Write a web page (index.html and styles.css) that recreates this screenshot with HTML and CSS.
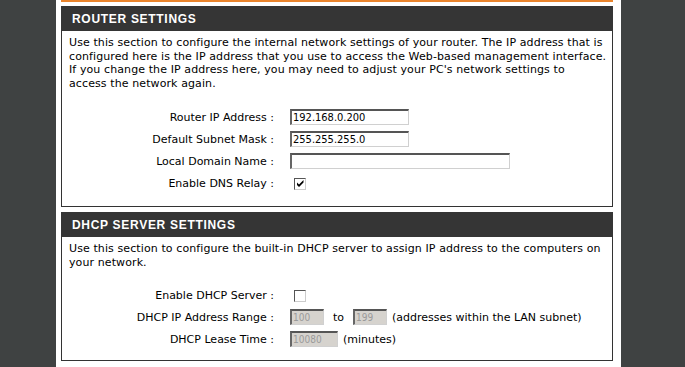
FILE: index.html
```html
<!DOCTYPE html>
<html lang="en">
<head>
    <meta charset="UTF-8">
    <title>Network Settings</title>
    <link rel="stylesheet" href="styles.css">
</head>
<body>
    <div id="main">
        <div class="topline"></div>

        <div class="section">
            <h2>ROUTER SETTINGS</h2>
            <div class="box">
                <p>Use this section to configure the internal network settings of your router. The IP address that is<br>
                configured here is the IP address that you use to access the Web-based management interface.<br>
                If you change the IP address here, you may need to adjust your PC's network settings to<br>
                access the network again.</p>
                <div class="rows rows-router">
                    <label>Router IP Address :</label>
                    <div><input type="text" class="ip" value="192.168.0.200"></div>
                    <label>Default Subnet Mask :</label>
                    <div><input type="text" class="ip" value="255.255.255.0"></div>
                    <label>Local Domain Name :</label>
                    <div><input type="text" class="domain" value=""></div>
                    <label>Enable DNS Relay :</label>
                    <div><span class="check checked"><svg width="9" height="9" viewBox="0 0 9 9"><path d="M1 3.5 L3 5.5 L7.5 1 L7.5 3.5 L3 8 L1 6 Z" fill="#000"/></svg></span></div>
                </div>
            </div>
        </div>

        <div class="section">
            <h2>DHCP SERVER SETTINGS</h2>
            <div class="box">
                <p>Use this section to configure the built-in DHCP server to assign IP address to the computers on<br>
                your network.</p>
                <div class="rows rows-dhcp">
                    <label>Enable DHCP Server :</label>
                    <div><span class="check"></span></div>
                    <label>DHCP IP Address Range :</label>
                    <div class="inline">
                        <input type="text" class="short" value="100" disabled>
                        <span class="to">to</span>
                        <input type="text" class="short" value="199" disabled>
                        <span class="note">(addresses within the LAN subnet)</span>
                    </div>
                    <label>DHCP Lease Time :</label>
                    <div class="inline">
                        <input type="text" class="lease" value="10080" disabled>
                        <span class="note">(minutes)</span>
                    </div>
                </div>
            </div>
        </div>
    </div>
</body>
</html>
```

FILE: styles.css
```css
body {
    margin: 0;
    background-color: #3f4242;
    font-family: "DejaVu Sans", sans-serif;
    font-size: 11px;
    color: #000;
}

#main {
    margin: 0 64px 0 56px;
    padding: 0 8px 1px 5px;
    height: 367px;
    box-sizing: border-box;
    background-color: #fff;
}

.topline {
    height: 2px;
    background-color: #ea842c;
    margin-bottom: 4px;
}

.section {
    margin-bottom: 5px;
}

.section h2 {
    margin: 0;
    height: 25px;
    line-height: 26px;
    padding-left: 11px;
    background-color: #353535;
    color: #fff;
    font-family: "Liberation Sans", Arial, sans-serif;
    font-size: 12px;
    font-weight: bold;
    letter-spacing: 0.7px;
}

.box {
    border: 1px solid #333;
    border-top: none;
    padding: 5px 7px 0 7px;
}

.box p {
    margin: 0;
    line-height: 13.5px;
    letter-spacing: 0.1px;
    white-space: nowrap;
}

.rows {
    display: grid;
    grid-template-columns: 205px auto;
    column-gap: 16px;
    grid-auto-rows: 22px;
    align-items: center;
}

.rows-router {
    margin-top: 16px;
    padding-bottom: 12px;
}

.rows-dhcp {
    margin-top: 15px;
    padding-bottom: 10px;
}

.rows label {
    text-align: right;
}

input {
    box-sizing: border-box;
    height: 16px;
    margin: 0;
    padding: 0 1px;
    border-style: solid;
    border-width: 2px 1px 1px 2px;
    border-color: #555 #d0d0d0 #d0d0d0 #666;
    font-family: "DejaVu Sans Condensed", "DejaVu Sans", sans-serif;
    font-size: 11px;
    color: #000;
    background-color: #fff;
    vertical-align: middle;
}

input:disabled {
    background-color: #d6d3ce;
    color: #9a9a9a;
    font-size: 10px;
}

.ip {
    width: 119px;
}

.domain {
    width: 220px;
}

.short {
    width: 34px;
}

.lease {
    width: 48px;
}

.inline {
    display: flex;
    align-items: center;
}

.to {
    margin: 0 9px;
}

.note {
    margin-left: 5px;
}

.check {
    display: inline-flex;
    align-items: center;
    justify-content: center;
    box-sizing: border-box;
    width: 12px;
    height: 12px;
    margin-left: 4px;
    border-style: solid;
    border-width: 1px;
    border-color: #555 #ccc #ccc #555;
    background-color: #fff;
    vertical-align: middle;
}

.check svg {
    display: block;
}
```
